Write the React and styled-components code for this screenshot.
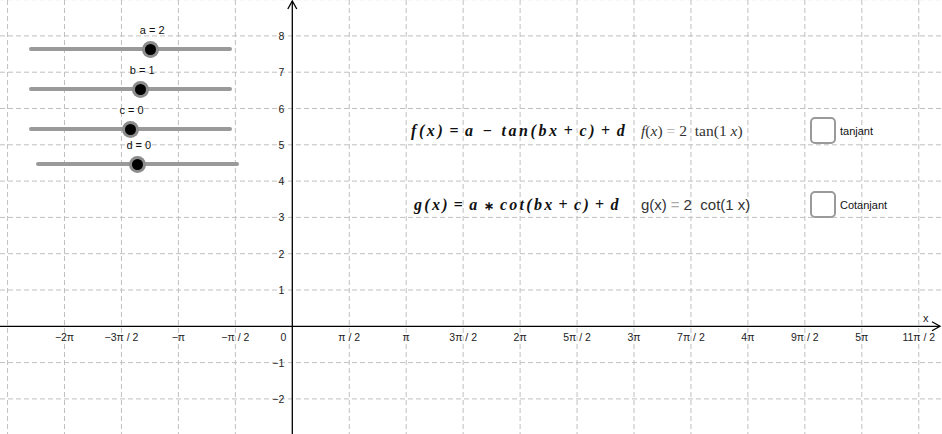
import React from "react";
import styled, { createGlobalStyle } from "styled-components";

const GlobalStyle = createGlobalStyle`
  html, body { margin: 0; padding: 0; background: #fff; overflow: hidden; }
  #root { width: 942px; height: 434px; }
`;

const OX = 292.3;
const OY = 326.3;
const UX = 56.95;
const UY = 36.3;

const Canvas = styled.div`
  position: relative;
  width: 942px;
  height: 434px;
  background: #ffffff;
  overflow: hidden;
  font-family: "Liberation Sans", Arial, sans-serif;
`;

const GraphSvg = styled.svg`
  position: absolute;
  inset: 0;
  display: block;
`;

const AxisText = styled.text`
  font-family: "Liberation Sans", Arial, sans-serif;
  font-size: 10.5px;
  fill: #222;
`;

/* ---------- sliders (GeoGebra objects on the free canvas) ---------- */

const SliderBox = styled.div`
  position: absolute;
  height: 4px;
`;

const Track = styled.div`
  width: 100%;
  height: 4px;
  border-radius: 2px;
  background: #9a9a9a;
`;

const Knob = styled.div`
  position: absolute;
  top: 50%;
  width: 17px;
  height: 17px;
  margin: -8.5px 0 0 -8.5px;
  border-radius: 50%;
  background: #8c8c8c;
  display: flex;
  align-items: center;
  justify-content: center;
  &::after {
    content: "";
    width: 11px;
    height: 11px;
    border-radius: 50%;
    background: #000;
  }
`;

const SliderLabel = styled.div`
  position: absolute;
  top: -23px;
  transform: translateX(-50%);
  font-size: 11px;
  line-height: 12px;
  color: #111;
  white-space: nowrap;
`;

/* ---------- formula / checkbox panel ---------- */

const Panel = styled.div`
  position: absolute;
  left: 411px;
  top: 117px;
  display: grid;
  grid-template-columns: 230px 169px auto;
  grid-auto-rows: 27px;
  row-gap: 47px;
  align-items: center;
  white-space: nowrap;
`;

const MathText = styled.span`
  font-family: "Liberation Serif", "Times New Roman", serif;
  font-weight: bold;
  font-style: italic;
  font-size: 16px;
  letter-spacing: ${(p) => p.$ls || 2.3}px;
  color: #111;
  padding-left: ${(p) => p.$indent || 0}px;
  padding-top: ${(p) => p.$drop || 0}px;
`;

const Op = styled.span`
  font-style: normal;
  padding: 0 ${(p) => p.$pad || 4}px;
  font-size: ${(p) => p.$size || 16}px;
`;

const Result = styled.span`
  font-family: ${(p) =>
    p.$serif
      ? `"Liberation Serif", "Times New Roman", serif`
      : `"Liberation Sans", Arial, sans-serif`};
  font-size: ${(p) => (p.$serif ? 15.5 : 15)}px;
  color: #333;
  padding-top: ${(p) => p.$drop || 0}px;
`;

const It = styled.i``;

const Eq = styled.span`
  color: #aaa;
  padding: 0 4px;
`;

const CheckRow = styled.label`
  display: flex;
  align-items: center;
  gap: 4px;
  font-size: 11px;
  color: #111;
`;

const Box = styled.span`
  box-sizing: border-box;
  width: 26px;
  height: 27px;
  border: 2px solid #9a9a9a;
  border-radius: 5px;
  background: #fff;
`;

const sliders = [
  { name: "a", value: 2, x1: 29, x2: 232.3, y: 49.3, k: 150.7 },
  { name: "b", value: 1, x1: 29, x2: 232.3, y: 89.3, k: 140.7 },
  { name: "c", value: 0, x1: 29, x2: 232.3, y: 129.3, k: 130 },
  { name: "d", value: 0, x1: 35.7, x2: 239.3, y: 164.3, k: 137.3 },
];

const xLabels = {
  "-4": "\u22122\u03c0",
  "-3": "\u22123\u03c0 / 2",
  "-2": "\u2212\u03c0",
  "-1": "\u2212\u03c0 / 2",
  1: "\u03c0 / 2",
  2: "\u03c0",
  3: "3\u03c0 / 2",
  4: "2\u03c0",
  5: "5\u03c0 / 2",
  6: "3\u03c0",
  7: "7\u03c0 / 2",
  8: "4\u03c0",
  9: "9\u03c0 / 2",
  10: "5\u03c0",
  11: "11\u03c0 / 2",
};

function Slider({ name, value, x1, x2, y, k }) {
  return (
    <SliderBox style={{ left: x1, top: y - 2, width: x2 - x1 }}>
      <Track />
      <Knob style={{ left: k - x1 }} />
      <SliderLabel style={{ left: k - x1 + 1.5 }}>
        {name} = {value}
      </SliderLabel>
    </SliderBox>
  );
}

function Graph() {
  const vx = [];
  for (let k = -5; k <= 11; k++) if (k !== 0) vx.push(k);
  const hy = [];
  for (let k = -3; k <= 9; k++) if (k !== 0) hy.push(k);
  return (
    <GraphSvg width="942" height="434" viewBox="0 0 942 434">
      <g stroke="#c0c0c0" strokeWidth="1" strokeDasharray="5 3">
        {vx.map((k) => (
          <line key={"v" + k} x1={OX + UX * k} y1="0" x2={OX + UX * k} y2="434" />
        ))}
        {hy.map((k) => (
          <line key={"h" + k} x1="0" y1={OY - UY * k} x2="942" y2={OY - UY * k} />
        ))}
      </g>
      <g stroke="#000" strokeWidth="1.3" fill="none">
        <line x1="0" y1={OY} x2="940" y2={OY} />
        <line x1={OX} y1="1" x2={OX} y2="434" />
        <polyline points={`932,${OY - 4.5} 940,${OY} 932,${OY + 4.5}`} />
        <polyline points={`${OX - 4.5},9 ${OX},1 ${OX + 4.5},9`} />
      </g>
      {Object.entries(xLabels).map(([k, t]) => (
        <AxisText key={"xl" + k} x={OX + UX * Number(k)} y={OY + 15} textAnchor="middle">
          {t}
        </AxisText>
      ))}
      <AxisText x={OX - 6} y={OY + 15} textAnchor="end">0</AxisText>
      {[1, 2, 3, 4, 5, 6, 7, 8, -1, -2].map((k) => (
        <AxisText key={"yl" + k} x={OX - 8} y={OY - UY * k + 4} textAnchor="end">
          {k < 0 ? "\u2212" + Math.abs(k) : k}
        </AxisText>
      ))}
      <AxisText x="923" y="322" style={{ fontSize: "11px" }}>x</AxisText>
    </GraphSvg>
  );
}

export default function App() {
  return (
    <>
      <GlobalStyle />
      <Canvas>
        <Graph />
        {sliders.map((s) => (
          <Slider key={s.name} {...s} />
        ))}
        <Panel>
          <MathText $drop={1} $ls={2.6}>
            f(x)<Op>=</Op>a<Op $pad={7}>−</Op>tan(bx<Op>+</Op>c)<Op>+</Op>d
          </MathText>
          <Result $serif $drop={1}>
            <It>f</It>(<It>x</It>)<Eq>=</Eq>2&nbsp; tan(1 <It>x</It>)
          </Result>
          <CheckRow>
            <Box />
            tanjant
          </CheckRow>
          <MathText $indent={3} $drop={0}>
            g(x)<Op>=</Op>a<Op $size={12}>∗</Op>cot(bx<Op>+</Op>c)<Op>+</Op>d
          </MathText>
          <Result>
            g(x)<Eq>=</Eq>2&nbsp; cot(1 x)
          </Result>
          <CheckRow>
            <Box />
            Cotanjant
          </CheckRow>
        </Panel>
      </Canvas>
    </>
  );
}
